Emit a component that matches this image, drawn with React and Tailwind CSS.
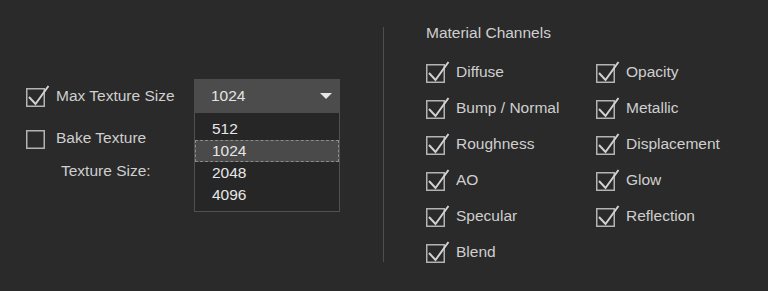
import React from "react";

const CheckBox = ({ checked }) => (
  <svg width="25" height="22" viewBox="0 0 25 22" className="shrink-0">
    <rect x="1.75" y="3.75" width="17.5" height="17.5" fill="none" stroke="#b3b3b3" strokeWidth="1.5" />
    {checked && (
      <polyline points="4,12 10.5,19 23.5,1" fill="none" stroke="#d2d2d2" strokeWidth="2" />
    )}
  </svg>
);

const channels = [
  "Diffuse",
  "Opacity",
  "Bump / Normal",
  "Metallic",
  "Roughness",
  "Displacement",
  "AO",
  "Glow",
  "Specular",
  "Reflection",
  "Blend",
];

const sizes = ["512", "1024", "2048", "4096"];

export default function App() {
  return (
    <div
      className="flex w-full h-[291px] bg-[#2a2a2a] text-[#cfcfcf] text-[15.5px] overflow-hidden"
      style={{ fontFamily: '"Liberation Sans", Arial, sans-serif' }}
    >
      {/* texture settings */}
      <div className="w-[383px] shrink-0 pl-[25px] pt-[79px]">
        <div className="flex items-center h-[34px]">
          <div className="flex items-center gap-[6px] w-[169px]">
            <CheckBox checked />
            <span>Max Texture Size</span>
          </div>
          <div className="relative w-[146px]">
            <div className="flex items-center justify-between h-[34px] bg-[#4c4c4c] pl-[17px] pr-[8px] text-[#e4e4e4]">
              <span>1024</span>
              <svg width="12" height="6" viewBox="0 0 12 6">
                <polygon points="0,0 12,0 6,6" fill="#e6e6e6" />
              </svg>
            </div>
            {/* open list */}
            <div className="absolute left-0 top-full w-full bg-[#262626] border border-[#505050] border-t-0 py-[5px]">
              {sizes.map((s) => (
                <div
                  key={s}
                  className={`h-[22px] flex items-center pl-[16px] text-[#e6e6e6] ${
                    s === "1024"
                      ? "bg-[#4a4a4a] border border-dashed border-[#8c8c8c]"
                      : "border border-transparent"
                  }`}
                >
                  {s}
                </div>
              ))}
            </div>
          </div>
        </div>

        <div className="flex items-center gap-[6px] h-[22px] mt-[14px]">
          <CheckBox />
          <span>Bake Texture</span>
        </div>

        <div className="flex items-center h-[22px] mt-[11px] ml-[36px]">Texture Size:</div>
      </div>

      <div className="w-px h-[235px] mt-[27px] bg-[#4e4e4e] shrink-0" />

      {/* material channels */}
      <div className="pl-[42px] pt-[23px]">
        <div className="h-[20px] flex items-center">Material Channels</div>
        <div className="grid grid-cols-[170px_170px] auto-rows-[36px] mt-[11px] -ml-px">
          {channels.map((c) => (
            <div key={c} className="flex items-center gap-[6px]">
              <CheckBox checked />
              <span>{c}</span>
            </div>
          ))}
        </div>
      </div>
    </div>
  );
}
